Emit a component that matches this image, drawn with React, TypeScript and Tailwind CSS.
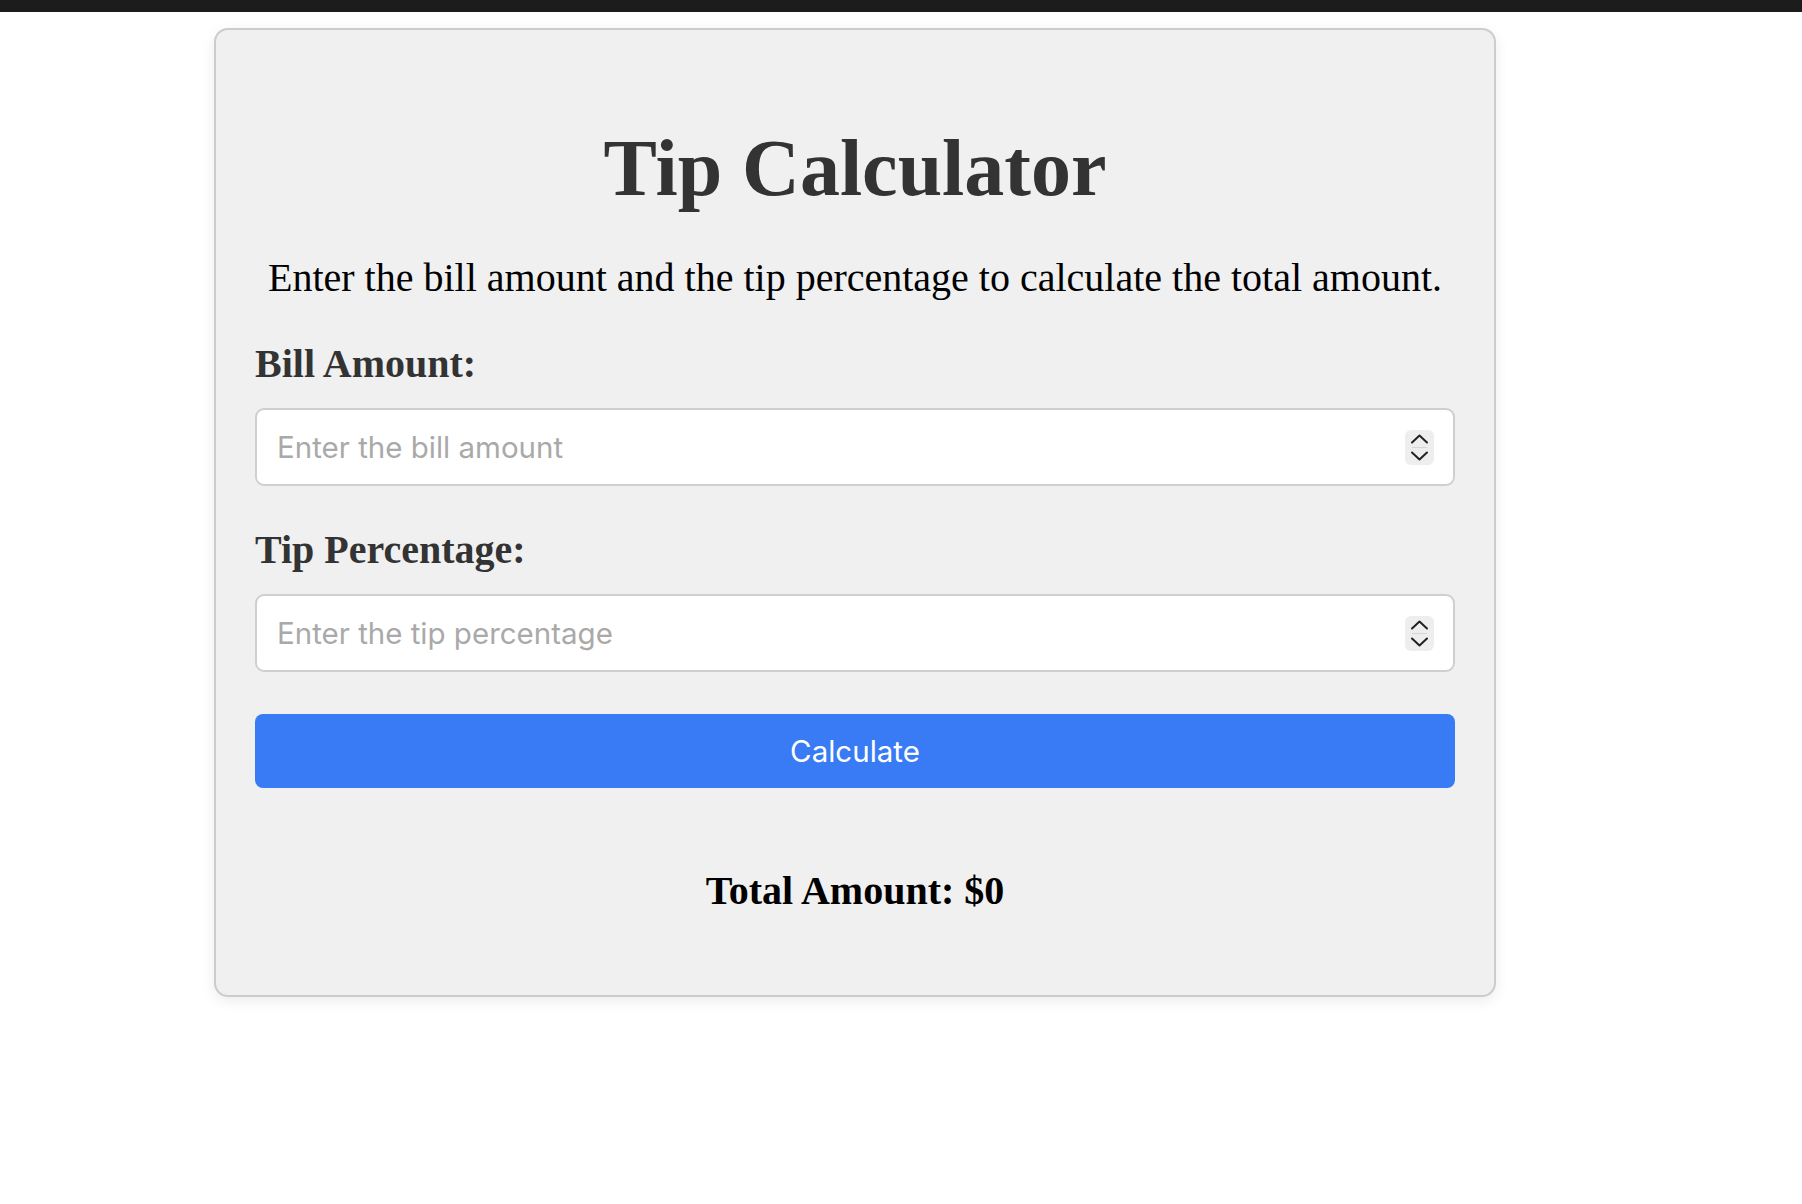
import { useState } from 'react';

function Stepper() {
  return (
    <div className="flex items-center justify-center w-[29px] h-[35px] rounded-md bg-[#eeeeee] shrink-0">
      <svg width="29" height="35" viewBox="0 0 29 35" fill="none">
        <polyline points="7,12.5 14.5,5.5 22,12.5" stroke="#222" strokeWidth="2" strokeLinecap="round" strokeLinejoin="round" />
        <line x1="7" y1="17.5" x2="22" y2="17.5" stroke="#d6d6d6" strokeWidth="1" />
        <polyline points="7,22.5 14.5,29.5 22,22.5" stroke="#222" strokeWidth="2" strokeLinecap="round" strokeLinejoin="round" />
      </svg>
    </div>
  );
}

function NumberField({ placeholder, value, onChange }: { placeholder: string; value: string; onChange: (v: string) => void }) {
  return (
    <div className="mt-[24px] flex items-center h-[78px] bg-white border-2 border-[#cfcfcf] rounded-[9px] pl-5 pr-[19px]">
      <input
        type="text"
        inputMode="decimal"
        value={value}
        onChange={(e) => onChange(e.target.value)}
        placeholder={placeholder}
        className="flex-1 min-w-0 bg-transparent outline-none font-['Inter',sans-serif] text-[29.5px] text-[#222] placeholder:text-[#a9a9a9]"
      />
      <Stepper />
    </div>
  );
}

export default function App() {
  const [bill, setBill] = useState('');
  const [tip, setTip] = useState('');
  const [total, setTotal] = useState(0);

  const calculate = () => {
    const b = parseFloat(bill) || 0;
    const t = parseFloat(tip) || 0;
    setTotal(Math.round((b + (b * t) / 100) * 100) / 100);
  };

  return (
    <div className="min-h-screen bg-white font-['Liberation_Serif',serif]">
      <div className="h-3 bg-[#1c1c1c]" />

      {/* Card */}
      <div className="ml-[214px] mt-4 w-[1282px] bg-[#f0f0f0] border-2 border-[#cccccc] rounded-[14px] shadow-[0_4px_14px_rgba(0,0,0,0.08)] px-[39px] pt-[98px] pb-[84px]">
        <h1 className="text-[80px] leading-none font-bold text-center text-[#333]">Tip Calculator</h1>
        <p className="mt-[50px] text-[40px] leading-none text-center text-black">
          Enter the bill amount and the tip percentage to calculate the total amount.
        </p>

        <label className="block mt-[46px] text-[40px] leading-none font-bold text-[#333]">Bill Amount:</label>
        <NumberField placeholder="Enter the bill amount" value={bill} onChange={setBill} />

        <label className="block mt-[44px] text-[40px] leading-none font-bold text-[#333]">Tip Percentage:</label>
        <NumberField placeholder="Enter the tip percentage" value={tip} onChange={setTip} />

        <button
          onClick={calculate}
          className="mt-[42px] w-full h-[74px] rounded-lg bg-[#387bf5] text-white font-['Inter',sans-serif] text-[29.5px]"
        >
          Calculate
        </button>

        <h2 className="mt-[83px] text-[40px] leading-none font-bold text-center text-black">Total Amount: ${total}</h2>
      </div>
    </div>
  );
}
